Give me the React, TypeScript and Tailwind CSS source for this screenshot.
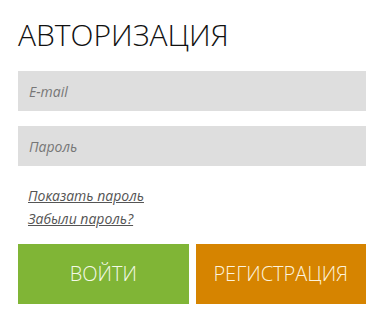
export default function App() {
  return (
    <div className="w-[384px] h-[323px] bg-white px-[18px] pt-[17px] font-['Open_Sans',sans-serif]">
      <h1 className="text-[30px] leading-[36px] font-light text-[#111]">АВТОРИЗАЦИЯ</h1>
      <div className="mt-[18px] flex flex-col gap-[15px]">
        <input
          placeholder="E-mail"
          className="h-10 w-full bg-[#dedede] px-[11px] text-[14px] italic text-[#555] placeholder:text-[#777] outline-none"
        />
        <input
          type="password"
          placeholder="Пароль"
          className="h-10 w-full bg-[#dedede] px-[11px] text-[14px] italic text-[#555] placeholder:text-[#777] outline-none"
        />
      </div>
      <div className="mt-[18px] flex flex-col pl-[10px] text-[14px] leading-[23px] italic text-[#555]">
        <a href="#" className="underline w-fit">Показать пароль</a>
        <a href="#" className="underline w-fit">Забыли пароль?</a>
      </div>
      <div className="mt-[14px] flex gap-[7px]">
        <button className="h-[60px] flex-1 bg-[#80b536] text-[20px] font-light text-[#f4f9e8]">ВОЙТИ</button>
        <button className="h-[60px] flex-1 bg-[#d68400] text-[20px] font-light text-[#fdf3dc]">РЕГИСТРАЦИЯ</button>
      </div>
    </div>
  );
}
